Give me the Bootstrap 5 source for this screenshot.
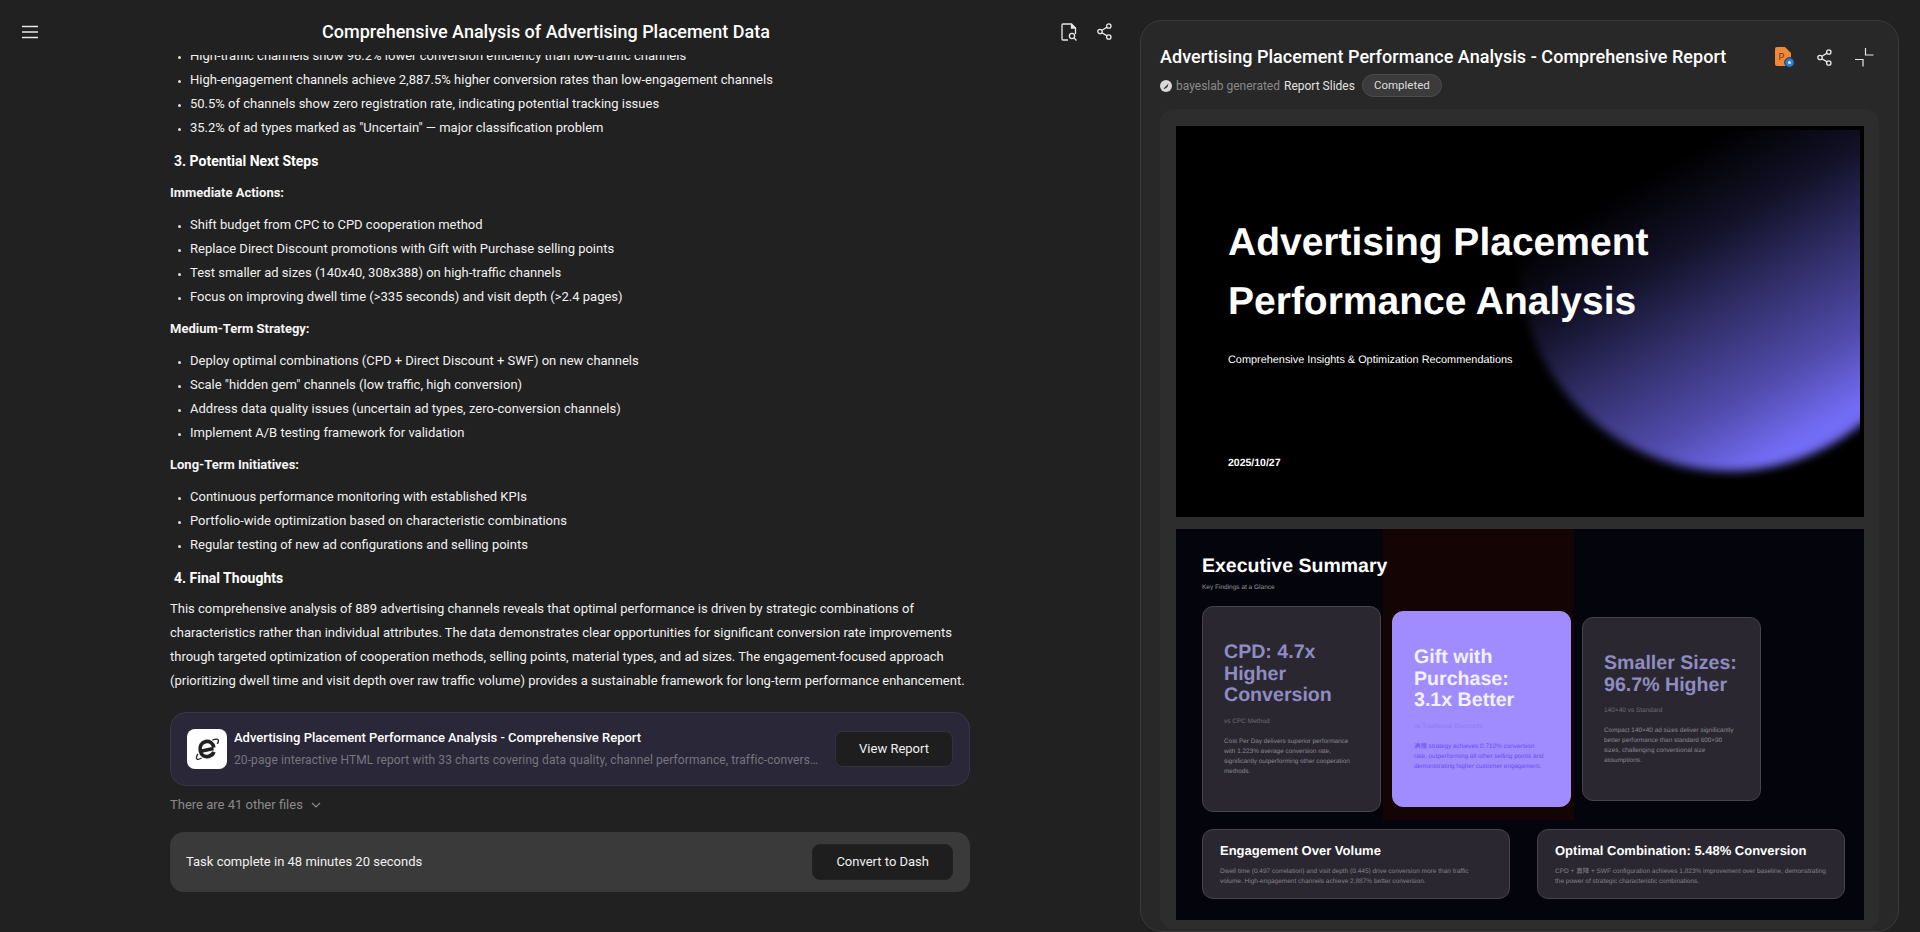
<!DOCTYPE html>
<html lang="en">
<head>
<meta charset="utf-8">
<title>Comprehensive Analysis of Advertising Placement Data</title>
<link href="https://cdn.jsdelivr.net/npm/bootstrap@5.3.0/dist/css/bootstrap.min.css" rel="stylesheet">
<style>
html,body{height:100%;}
body{background:#212121;color:#f0f0f0;font-family:Roboto,"Noto Sans CJK SC",sans-serif;font-size:13px;line-height:24px;overflow:hidden;}
.app-shell{height:932px;}
.chat-pane{width:1140px;flex:none;height:932px;}
.chat-head{height:55px;flex:none;background:#212121;padding-top:8px;position:relative;z-index:2;}
.head-side-l{width:60px;padding-left:22px;}
.head-side-r{width:108px;gap:19px;padding-left:29px;}
.chat-title{font-size:18px;font-weight:500;color:#fff;line-height:27px;}
.chat-scroll{flex:1 1 auto;min-height:0;overflow:hidden;padding:0 170px 40px;}
.chat-scroll ul{padding-left:20px;margin:0;flex:none;}
.chat-scroll li::marker{font-size:9px;color:#ddd;}
.sec-head{font-size:14px;font-weight:700;line-height:24px;margin:9px 0 7px;padding-left:4px;color:#fff;flex:none;}
.sec-lead{margin-bottom:8px;}
.sub-head{font-weight:700;line-height:24px;margin:8px 0;font-size:13px;color:#f4f4f4;flex:none;}
.sec-head + .sub-head{margin-top:0;}
.para{margin:0 0 19px;flex:none;}
.file-box{height:74px;background:#2a2738;border:1px solid #393742;border-radius:16px;padding:0 16px;gap:7px;}
.file-ico{width:40px;height:40px;background:#fff;border-radius:8px;flex:none;}
.file-name{font-weight:500;font-size:13px;line-height:22px;color:#fff;}
.file-desc{font-size:12px;letter-spacing:.1px;line-height:22px;color:#77757f;}
.file-texts{min-width:0;flex:1 1 auto;margin-right:9px;}
.dark-btn{background:#1e1e1e;color:#f0f0f0;border:1px solid #333;border-radius:8px;font-size:13px;line-height:20px;padding:7px 23px;white-space:nowrap;flex:none;}
.dark-btn:hover{background:#1e1e1e;color:#f0f0f0;border-color:#333;}
.other-files{color:#8a8a8a;font-size:13px;line-height:22px;margin:8px 0 16px;gap:8px;}
.task-bar{height:60px;background:#3a3a3a;border-radius:14px;padding:0 17px 0 16px;}
.task-bar .dark-btn{border-color:#222;}
.side-panel{width:759px;flex:none;margin-top:20px;height:912px;background:#282828;border:1px solid #3a3a3a;border-radius:22px;padding:22px 19px 0;overflow:hidden;}
.side-title{font-size:18px;font-weight:500;color:#fff;line-height:28px;letter-spacing:.04px;}
.side-icons{gap:22px;padding-right:5px;}
.meta-row{font-size:12px;margin-top:3px;height:23px;gap:7px;color:#8a8a8a;line-height:20px;}
.meta-row b{font-weight:400;color:#e2e2e2;}
.pill-done{background:#3b3b3b;border:1px solid #4c4c4c;border-radius:12px;height:23px;padding:0 11px;font-size:11.500px;color:#ddd;line-height:21px;}
.slides-wrap{margin-top:12px;background:#2d2d2d;border-radius:14px;padding:17px 15px 0 16px;width:719px;height:820px;overflow:hidden;}
.slide-frame{width:688px;height:391px;position:relative;overflow:hidden;font-family:"Liberation Sans","Noto Sans CJK SC",sans-serif;text-rendering:geometricPrecision;}
.slide-a{background:#000;padding:87px 0 0 52px;color:#fff;margin-bottom:12px;}
.glow-clip{position:absolute;left:0;top:4px;right:4px;bottom:4px;overflow:hidden;}
.glow-orb{position:absolute;left:343px;top:-79px;width:420px;height:420px;border-radius:50%;background:linear-gradient(150deg,rgba(115,108,245,0) 30%,rgba(115,108,245,.16) 44%,rgba(115,108,245,.42) 57%,rgba(115,108,245,.7) 72%,#736cf5 83%);filter:blur(5px);}
.s-title{position:relative;font-size:39px;font-weight:700;line-height:59px;margin:0;}
.s-sub{position:relative;font-size:10.900px;line-height:16px;margin:21px 0 0;}
.s-date{position:relative;font-size:10.500px;font-weight:700;line-height:16px;margin:87px 0 0;}
.slide-b{background:#04040c;padding:24px 0 0 26px;color:#fff;}
.red-band{position:absolute;left:207px;top:0;width:191px;height:291px;background:#140404;}
.b-title{position:relative;font-size:19.500px;font-weight:700;line-height:26px;margin:0;}
.b-sub{position:relative;font-size:6.500px;line-height:10px;color:#999;margin:4px 0 13px;}
.tile-row{position:relative;gap:11px;}
.tile{width:179px;flex:none;background:#2a2730;border:1px solid #45434b;border-radius:11px;padding:35px 22px 35px 21px;}
.tile-hot{background:#a08cff;border-color:#a08cff;}
.tile-head{font-size:19.600px;font-weight:700;line-height:21.700px;color:#8f8cc2;margin:0 0 10px;}
.tile-hot .tile-head{color:#f3f0ff;}
.tile-vs{font-size:6.500px;line-height:10px;color:#6e6c76;margin:0 0 10px;}
.tile-hot .tile-vs{color:#8f78fa;}
.tile-txt{font-size:6.400px;line-height:9.800px;color:#8b8991;margin:0;}
.tile-hot .tile-txt{color:#6a4cf0;}
.wide-row{position:relative;gap:27px;margin-top:17px;}
.wide-tile{width:308px;height:70px;flex:none;background:#2a2730;border:1px solid #45434b;border-radius:11px;padding:13px 17px 0;}
.wide-head{font-size:13px;font-weight:700;line-height:16px;color:#fff;margin:0 0 8px;}
.wide-txt{font-size:6.500px;line-height:10px;color:#85838b;margin:0;}
</style>
</head>
<body>
<div class="app-shell d-flex">
  <main class="chat-pane d-flex flex-column">
    <header class="chat-head d-flex align-items-center">
      <div class="head-side-l d-flex">
        <svg width="16" height="14" viewBox="0 0 16 14" fill="none" stroke="#e8e8e8" stroke-width="1.7"><path d="M0 1.500h16M0 7h16M0 12.500h16"/></svg>
      </div>
      <div class="chat-title flex-grow-1 text-center">Comprehensive Analysis of Advertising Placement Data</div>
      <div class="head-side-r d-flex align-items-center">
        <svg width="17" height="18" viewBox="0 0 17 18" fill="none" stroke="#e8e8e8" stroke-width="1.3"><path d="M7 17H2a1 1 0 0 1-1-1V2a1 1 0 0 1 1-1h8.500l4 4v6"/><path d="M10.500 1v4h4" fill="#e8e8e8"/><circle cx="11" cy="13" r="2.600"/><path d="M13 15l2.500 2.500"/></svg>
        <svg width="15" height="17" viewBox="0 0 15 17" fill="none" stroke="#e8e8e8" stroke-width="1.300"><circle cx="11.800" cy="3" r="2.200"/><circle cx="11.800" cy="14" r="2.200"/><circle cx="3" cy="8.500" r="2.200"/><path d="M5 7.300l5-3.200M5 9.700l5 3.200"/></svg>
      </div>
    </header>
    <div class="chat-scroll d-flex flex-column justify-content-end">
      <ul>
        <li>High-traffic channels show 96.2% lower conversion efficiency than low-traffic channels</li>
        <li>High-engagement channels achieve 2,887.5% higher conversion rates than low-engagement channels</li>
        <li>50.5% of channels show zero registration rate, indicating potential tracking issues</li>
        <li>35.2% of ad types marked as "Uncertain" — major classification problem</li>
      </ul>
      <h3 class="sec-head sec-lead">3. Potential Next Steps</h3>
      <p class="sub-head">Immediate Actions:</p>
      <ul>
        <li>Shift budget from CPC to CPD cooperation method</li>
        <li>Replace Direct Discount promotions with Gift with Purchase selling points</li>
        <li>Test smaller ad sizes (140x40, 308x388) on high-traffic channels</li>
        <li>Focus on improving dwell time (&gt;335 seconds) and visit depth (&gt;2.4 pages)</li>
      </ul>
      <p class="sub-head">Medium-Term Strategy:</p>
      <ul>
        <li>Deploy optimal combinations (CPD + Direct Discount + SWF) on new channels</li>
        <li>Scale "hidden gem" channels (low traffic, high conversion)</li>
        <li>Address data quality issues (uncertain ad types, zero-conversion channels)</li>
        <li>Implement A/B testing framework for validation</li>
      </ul>
      <p class="sub-head">Long-Term Initiatives:</p>
      <ul>
        <li>Continuous performance monitoring with established KPIs</li>
        <li>Portfolio-wide optimization based on characteristic combinations</li>
        <li>Regular testing of new ad configurations and selling points</li>
      </ul>
      <h3 class="sec-head">4. Final Thoughts</h3>
      <p class="para">This comprehensive analysis of 889 advertising channels reveals that optimal performance is driven by strategic combinations of characteristics rather than individual attributes. The data demonstrates clear opportunities for significant conversion rate improvements through targeted optimization of cooperation methods, selling points, material types, and ad sizes. The engagement-focused approach (prioritizing dwell time and visit depth over raw traffic volume) provides a sustainable framework for long-term performance enhancement.</p>
      <div class="file-box d-flex align-items-center flex-shrink-0">
        <div class="file-ico d-flex align-items-center justify-content-center">
          <svg width="28" height="28" viewBox="0 0 26 26" fill="none" stroke="#222">
            <g transform="rotate(-12 13 13)"><path d="M19 13.800H8M19.500 13c0-4.200-2.800-7-6.500-7S6.500 9.200 6.500 13.500 9.300 20 13 20c2.500 0 4.500-1 5.700-3" stroke-width="3.400"/></g>
            <path d="M18 4.800c2.500-1 4.500-1.300 5.300-.5 .7 .8 .3 2.300-.8 4M4.500 17.500c-1.200 2.200-1.700 3.900-.9 4.700 .8 .7 2.500 .3 4.400-.8" stroke-width="1.200"/>
          </svg>
        </div>
        <div class="file-texts">
          <div class="file-name text-truncate">Advertising Placement Performance Analysis - Comprehensive Report</div>
          <div class="file-desc text-truncate">20-page interactive HTML report with 33 charts covering data quality, channel performance, traffic-conversion analysis and optimization recommendations</div>
        </div>
        <button type="button" class="btn dark-btn">View Report</button>
      </div>
      <div class="other-files d-flex align-items-center flex-shrink-0">There are 41 other files
        <svg width="10" height="6" viewBox="0 0 10 6" fill="none" stroke="#8a8a8a" stroke-width="1.200"><path d="M1 1l4 4 4-4"/></svg>
      </div>
      <div class="task-bar d-flex align-items-center justify-content-between flex-shrink-0">
        <span>Task complete in 48 minutes 20 seconds</span>
        <button type="button" class="btn dark-btn">Convert to Dash</button>
      </div>
    </div>
  </main>
  <aside class="side-panel">
    <div class="d-flex align-items-center justify-content-between">
      <div class="side-title">Advertising Placement Performance Analysis - Comprehensive Report</div>
      <div class="side-icons d-flex align-items-center">
        <svg width="20" height="21" viewBox="0 0 20 21"><path d="M2 0h8l6 6v11a2 2 0 0 1-2 2H2a2 2 0 0 1-2-2V2a2 2 0 0 1 2-2z" fill="#f0883c"/><text x="3.500" y="12.500" font-size="9" font-family="Roboto" fill="#6b3310">P</text><circle cx="14.500" cy="15.500" r="4.800" fill="#2a7fdc" stroke="#282828"/><circle cx="14.500" cy="15.500" r="1.500" fill="#cfe4fb"/></svg>
        <svg width="15" height="17" viewBox="0 0 15 17" fill="none" stroke="#e8e8e8" stroke-width="1.300"><circle cx="11.800" cy="3" r="2.200"/><circle cx="11.800" cy="14" r="2.200"/><circle cx="3" cy="8.500" r="2.200"/><path d="M5 7.300l5-3.200M5 9.700l5 3.200"/></svg>
        <svg width="20" height="20" viewBox="0 0 20 20" fill="none" stroke="#e8e8e8" stroke-width="1.200"><path d="M11.500 1v7h8M1 12.500h8v7"/></svg>
      </div>
    </div>
    <div class="meta-row d-flex align-items-center">
      <span class="d-flex align-items-center gap-1"><svg width="12" height="12" viewBox="0 0 12 12"><circle cx="6" cy="6" r="6" fill="#d8d8d8"/><path d="M3.500 8.500L8.500 3.500 7.500 7 4.500 9z" fill="#333"/></svg> bayeslab generated <b>Report Slides</b></span>
      <span class="pill-done">Completed</span>
    </div>
    <div class="slides-wrap">
      <section class="slide-frame slide-a">
        <div class="glow-clip"><div class="glow-orb"></div></div>
        <h2 class="s-title">Advertising Placement<br>Performance Analysis</h2>
        <p class="s-sub">Comprehensive Insights &amp; Optimization Recommendations</p>
        <p class="s-date">2025/10/27</p>
      </section>
      <section class="slide-frame slide-b">
        <div class="red-band"></div>
        <h2 class="b-title">Executive Summary</h2>
        <p class="b-sub">Key Findings at a Glance</p>
        <div class="tile-row d-flex align-items-center">
          <div class="tile">
            <h3 class="tile-head">CPD: 4.7x Higher Conversion</h3>
            <p class="tile-vs">vs CPC Method</p>
            <p class="tile-txt">Cost Per Day delivers superior performance with 1.223% average conversion rate, significantly outperforming other cooperation methods.</p>
          </div>
          <div class="tile tile-hot">
            <h3 class="tile-head">Gift with Purchase: 3.1x Better</h3>
            <p class="tile-vs">vs Traditional Discounts</p>
            <p class="tile-txt">满赠 strategy achieves 0.712% conversion rate, outperforming all other selling points and demonstrating higher customer engagement.</p>
          </div>
          <div class="tile">
            <h3 class="tile-head">Smaller Sizes: 96.7% Higher</h3>
            <p class="tile-vs">140×40 vs Standard</p>
            <p class="tile-txt">Compact 140×40 ad sizes deliver significantly better performance than standard 600×90 sizes, challenging conventional size assumptions.</p>
          </div>
        </div>
        <div class="wide-row d-flex">
          <div class="wide-tile">
            <h3 class="wide-head">Engagement Over Volume</h3>
            <p class="wide-txt">Dwell time (0.497 correlation) and visit depth (0.445) drive conversion more than traffic volume. High-engagement channels achieve 2,887% better conversion.</p>
          </div>
          <div class="wide-tile">
            <h3 class="wide-head">Optimal Combination: 5.48% Conversion</h3>
            <p class="wide-txt">CPD + 直降 + SWF configuration achieves 1,823% improvement over baseline, demonstrating the power of strategic characteristic combinations.</p>
          </div>
        </div>
      </section>
    </div>
  </aside>
</div>
<script src="https://cdn.jsdelivr.net/npm/bootstrap@5.3.0/dist/js/bootstrap.bundle.min.js"></script>
</body>
</html>
